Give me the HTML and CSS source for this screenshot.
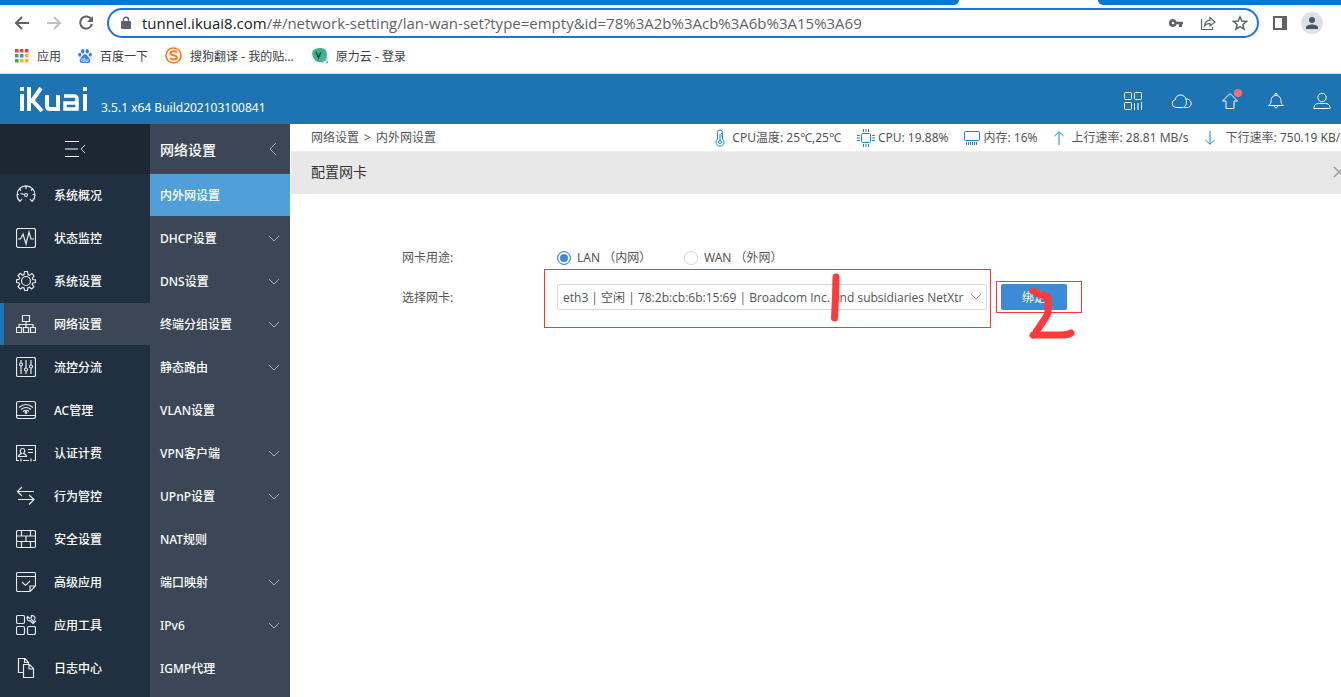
FILE: index.html
```html
<!DOCTYPE html>
<html lang="zh-CN">
<head>
<meta charset="utf-8">
<title>iKuai - 内外网设置</title>
<link rel="stylesheet" href="styles.css">
</head>
<body>
<div class="browser">
  <div class="tabstrip"><span class="tabstrip-left"></span><span class="tabstrip-right"></span></div>
  <div class="toolbar">
    <button class="tool" aria-label="后退"><svg width="16" height="16" viewBox="0 0 16 16"><path d="M15 8H2M8 2L2 8l6 6" fill="none" stroke="#5f6368" stroke-width="2"/></svg></button>
    <button class="tool" aria-label="前进"><svg width="16" height="16" viewBox="0 0 16 16"><path d="M1 8h13M8 2l6 6-6 6" fill="none" stroke="#bdc1c6" stroke-width="2"/></svg></button>
    <button class="tool" aria-label="刷新"><svg width="16" height="16" viewBox="0 0 16 16"><path d="M13.400 4.600A6 6 0 1 0 14 9" fill="none" stroke="#5f6368" stroke-width="2"/><path d="M15 1v6H9z" fill="#5f6368"/></svg></button>
    <div class="omnibox">
      <svg width="10" height="14" viewBox="0 0 10 14"><path d="M2.500 6V3.700a2.500 2.500 0 0 1 5 0V6" fill="none" stroke="#5f6368" stroke-width="1.400"/><rect y="5" width="10" height="8" rx="1" fill="#5f6368"/></svg>
      <p class="url"><span class="url-host">tunnel.ikuai8.com</span>/#/network-setting/lan-wan-set?type=empty&amp;id=78%3A2b%3Acb%3A6b%3A15%3A69</p>
      <div class="omni-actions">
        <svg width="16" height="16" viewBox="0 0 16 16"><path fill="#5f6368" fill-rule="evenodd" d="M5 4a4 4 0 1 0 3.700 5.300H11V12h3V9.300h1V6.700H8.700A4 4 0 0 0 5 4zm0 2.700a1.300 1.300 0 1 1 0 2.600 1.300 1.300 0 0 1 0-2.600z"/></svg>
        <svg width="16" height="16" viewBox="0 0 16 16"><path d="M1.500 4v10.500h11V12M4.500 11c.5-4 2.500-5.500 5.500-5.800V2.500L15 7l-5 4V8.300c-2.300 0-4 .7-5.500 2.700z" fill="none" stroke="#5f6368" stroke-width="1.200"/></svg>
        <svg width="16" height="16" viewBox="0 0 16 16"><path d="M8 1.800l1.800 4.300 4.700.4-3.600 3 1.100 4.600L8 11.700l-4 2.400 1.100-4.600-3.600-3 4.700-.4z" fill="none" stroke="#5f6368" stroke-width="1.500"/></svg>
      </div>
    </div>
    <button class="tool" aria-label="侧边栏"><svg width="14" height="14" viewBox="0 0 14 14"><path fill="#5f6368" fill-rule="evenodd" d="M0 0h14v14H0zM2 2v10h7V2z"/></svg></button>
    <button class="tool" aria-label="用户"><svg width="22" height="22" viewBox="0 0 22 22"><circle cx="11" cy="11" r="11" fill="#dee1e6"/><circle cx="11" cy="8" r="3" fill="#4d5669"/><path d="M5 17v-1.500c0-2 3-3 6-3s6 1 6 3V17z" fill="#4d5669"/></svg></button>
  </div>
  <nav class="bookmarks">
    <a href="#apps"><svg width="14" height="14" viewBox="0 0 14 14"><path fill="#ea4335" d="M0 0h3.500v3.500H0zM5 0h3.500v3.500H5zM10 0h3.500v3.500H10z"/><path fill="#34a853" d="M0 5h3.500v3.500H0zM0 10h3.500v3.500H0z"/><path fill="#4285f4" d="M5 5h3.500v3.500H5z"/><path fill="#fbbc04" d="M10 5h3.500v3.500H10zM5 10h3.500v3.500H5zM10 10h3.500v3.500H10z"/></svg><span>应用</span></a>
    <a href="#baidu"><svg width="14" height="16" viewBox="0 0 14 16"><g fill="#2f80f5"><ellipse cx="4.700" cy="3.200" rx="1.700" ry="2.300"/><ellipse cx="9.200" cy="3.200" rx="1.700" ry="2.300"/><ellipse cx="1.700" cy="6.800" rx="1.600" ry="2"/><ellipse cx="12.300" cy="6.800" rx="1.600" ry="2"/><path d="M7 6.300c2.300 0 2.600 2.400 4.200 3.900 1.800 1.600 1.300 4.500-1 4.800-1.300.2-2-.3-3.200-.3s-1.900.5-3.200.3c-2.300-.3-2.800-3.200-1-4.800C4.400 8.700 4.700 6.300 7 6.300z"/></g><path d="M6.200 9.500v3.900H4.500a1 1 0 0 1 0-2.200h1.600M7.800 11v2.400H10V11" fill="none" stroke="#fff" stroke-width=".8"/></svg><span>百度一下</span></a>
    <a href="#sogou"><svg width="17" height="17" viewBox="0 0 17 17"><circle cx="8.500" cy="8.500" r="7.500" fill="#fff" stroke="#ff7518" stroke-width="1.600"/><path d="M12 5.300C10.500 4 5.300 3.800 5.300 6.300c0 2.600 6.600 1.500 6.600 4.200 0 2.400-5 2.300-7 .8" fill="none" stroke="#ff7518" stroke-width="2"/></svg><span>搜狗翻译 - 我的贴...</span></a>
    <a href="#yuanli"><svg width="17" height="17" viewBox="0 0 17 17"><path d="M2 3.500C4 .5 12 0 14.500 3s1.500 9-1 11-7.500 1.500-9.500-1S0 6.500 2 3.500z" fill="#3cb489"/><path d="M5 5l2.500 5.500L10 5" fill="none" stroke="#213f52" stroke-width="1.500"/><path d="M10.500 12h3M12 12v4M16.500 12h-2v2h2v2h-2" fill="none" stroke="#75a9e8" stroke-width="1"/></svg><span>原力云 - 登录</span></a>
  </nav>
</div>

<header class="header">
  <svg class="logo" role="img" aria-label="iKuai" width="69" height="25" viewBox="0 0 69 25"><g fill="none" stroke="#fff" stroke-width="4"><path d="M3 0v4M3 7v17M10 0v24M10 14h3L22 1M13 13l10 11" /><path d="M28 8v11q0 3 3 3h8V8" /><path d="M45 9h10q3 0 3 3v10H46v-6h12"  stroke-width="3.500"/><path d="M66 0v4M66 7v17"/></g></svg>
  <span class="version">3.5.1 x64 Build202103100841</span>
  <div class="header-actions">
    <button aria-label="应用"><svg width="20" height="20" viewBox="0 0 20 20"><rect x="1.500" y="1.500" width="7" height="7" rx="1"/><rect x="11.500" y="1.500" width="7" height="7" rx="1"/><rect x="1.500" y="11.500" width="7" height="7" rx="1"/><path d="M11.500 12v7M15 12v7M18.500 11v8"/></svg></button>
    <button aria-label="云"><svg width="22" height="20" viewBox="0 0 22 20"><path d="M5 16.500a4 4 0 0 1-.6-7.900C4.800 2.500 14 2.500 15 8.500c1.500 3-.5 8-3.500 8zM15 8c5-.5 7.500 6 2.500 8.500h-4"/></svg></button>
    <button class="has-dot" aria-label="升级"><svg width="18" height="20" viewBox="0 0 18 20"><path d="M9 2.500L1.500 10H5v7.500h8V10h3.500z"/></svg></button>
    <button aria-label="通知"><svg width="18" height="20" viewBox="0 0 18 20"><path d="M1.500 14.500c3-1 2-4 3-7 1-4 8-4 9 0 1 3 0 6 3 7zM7 14.500q2 5 4 0M8 4V2.500h2V4"/></svg></button>
    <button aria-label="账户"><svg width="18" height="20" viewBox="0 0 18 20"><circle cx="9" cy="6.500" r="4.200"/><path d="M1 17.500v-1c0-2.500 2-4 4.500-4h7c2.500 0 4.500 1.500 4.500 4v1z"/></svg></button>
  </div>
</header>

<div class="app">
  <nav class="sidebar">
    <button class="collapse" aria-label="收起菜单"><svg width="22" height="18" viewBox="0 0 22 18"><path d="M1 1.500h14M1 16.500h14" stroke="#fff"/><path d="M1 9h13" stroke="#8b949d" stroke-width="2"/><path d="M21 5l-4 4 4 4" stroke="#d3d7da"/></svg></button>
    <a class="item" href="#overview"><svg width="20" height="20" viewBox="0 0 20 20"><path d="M4 16.500a9 9 0 1 1 12 0M4 16.500L6 14M16 16.500L14 14M10 1v3M1 9.500h2M16.500 9.500H19M3.500 4L5 5.500M16.500 4L15 5.500M4.500 8.500l4 1"/><circle cx="10" cy="10" r="1.500"/></svg><span>系统概况</span></a>
    <a class="item" href="#monitor"><svg width="20" height="20" viewBox="0 0 20 20"><rect x=".5" y=".5" width="19" height="19" rx="2"/><path d="M2 11h2.500L7 6l3 10L13 4l2 7h3"/></svg><span>状态监控</span></a>
    <a class="item" href="#system"><svg width="20" height="20" viewBox="0 0 20 20"><circle cx="10" cy="10" r="4.500"/><path d="M8.500.5h3l.5 3 1.500.7L16 2.500 18 5l-1.700 2.200.5 1.300 2.700.3v2.700l-2.700.5-.6 1.500L18 15.700 15.700 18l-2.400-1.700-1.500.6-.4 2.600H8.600L8 17l-1.400-.6L4.300 18 2 15.700l1.700-2.300L3 12l-2.500-.5V8.800L3 8.300 3.700 7 2 4.500 4.300 2.300l2.300 1.900L8 3.500z"/></svg><span>系统设置</span></a>
    <a class="item current" href="#network"><svg width="20" height="20" viewBox="0 0 20 20"><path d="M6.500 1.500h7v6h-7zM.5 13.500h5v5h-5zM7.500 13.500h5v5h-5zM14.500 13.500h5v5h-5zM10 7.500v6M3 13.500v-3h14v3"/></svg><span>网络设置</span></a>
    <a class="item" href="#flow"><svg width="20" height="20" viewBox="0 0 20 20"><rect x=".5" y=".5" width="19" height="19" rx="1.500"/><path d="M5 3v3M5 9v8M10 3v8M10 14v3M15 3v5M15 11v6"/><circle cx="5" cy="7.500" r="1.500"/><circle cx="10" cy="12.500" r="1.500"/><circle cx="15" cy="9.500" r="1.500"/></svg><span>流控分流</span></a>
    <a class="item" href="#ac"><svg width="20" height="20" viewBox="0 0 20 20"><rect x=".5" y="1.500" width="19" height="17" rx="2"/><path d="M1 15.500h18M3 7.500q7-6 14 0M5 9.500q5-4 10 0M7 11.500q3-2.500 6 0"/><circle cx="10" cy="12.500" r=".8"/></svg><span>AC管理</span></a>
    <a class="item" href="#auth"><svg width="20" height="20" viewBox="0 0 20 20"><path d="M3 17.500H.5v-15h19v15H17M5 15.500v3M15 15.500v3M7 17.500h6M12 6.500h5M12 9.500h5M2.500 13.500c0-2 1.500-2 3-3-2-2-1.500-5 1-5s3 3 1 5c1.500 1 3 1 3 3z"/></svg><span>认证计费</span></a>
    <a class="item" href="#behavior"><svg width="20" height="20" viewBox="0 0 20 20"><path d="M18 5.500H1.500M6 1L1.500 5.500 6 10M2 13.500h16M13 9l5 4.500-5 5"/></svg><span>行为管控</span></a>
    <a class="item" href="#security"><svg width="20" height="20" viewBox="0 0 20 20"><rect x=".5" y="1.500" width="19" height="17" rx="1.500"/><path d="M1 7h18M1 12.500h18M5.500 2v5M14.500 2v5M10 7v5.500M5.500 12.500v6M14.500 12.500v6"/></svg><span>安全设置</span></a>
    <a class="item" href="#advanced"><svg width="20" height="20" viewBox="0 0 20 20"><path d="M19.500 14V2q0-1.500-1.500-1.500H2Q.5.500.5 2v16q0 1.500 1.500 1.500h12zM14 19.500V14h5.500M1 4.500h18M6 10l3.500 3.500L14 9"/></svg><span>高级应用</span></a>
    <a class="item" href="#tools"><svg width="20" height="20" viewBox="0 0 20 20"><rect x=".5" y=".5" width="8" height="8" rx="1.500"/><rect x=".5" y="11.500" width="8" height="8" rx="1.500"/><rect x="11.500" y="11.500" width="8" height="8" rx="1.500"/><path d="M11.500 1.500l2 2 2-1v-2c3 0 4 2 3 4l1 2-2.500 2-3-3c-2 1-3.500-1-2.500-4zM15 4l3 3"/></svg><span>应用工具</span></a>
    <a class="item" href="#log"><svg width="20" height="20" viewBox="0 0 20 20"><path d="M7 14.500H2.500V.5H9l3.500 4v2M8.500.5v4h4M7.500 6.500h6l4 4v9h-10zM13 6.500V11h4.500"/></svg><span>日志中心</span></a>
  </nav>

  <nav class="submenu">
    <button class="submenu-title"><span>网络设置</span><svg width="8" height="12" viewBox="0 0 8 12"><path d="M7 0L1 6l6 6"/></svg></button>
    <a class="item active" href="#lanwan"><span>内外网设置</span></a>
    <a class="item" href="#dhcp"><span>DHCP设置</span><svg width="12" height="7" viewBox="0 0 12 7"><path d="M1 1l5 5 5-5"/></svg></a>
    <a class="item" href="#dns"><span>DNS设置</span><svg width="12" height="7" viewBox="0 0 12 7"><path d="M1 1l5 5 5-5"/></svg></a>
    <a class="item" href="#group"><span>终端分组设置</span><svg width="12" height="7" viewBox="0 0 12 7"><path d="M1 1l5 5 5-5"/></svg></a>
    <a class="item" href="#route"><span>静态路由</span><svg width="12" height="7" viewBox="0 0 12 7"><path d="M1 1l5 5 5-5"/></svg></a>
    <a class="item" href="#vlan"><span>VLAN设置</span></a>
    <a class="item" href="#vpn"><span>VPN客户端</span><svg width="12" height="7" viewBox="0 0 12 7"><path d="M1 1l5 5 5-5"/></svg></a>
    <a class="item" href="#upnp"><span>UPnP设置</span><svg width="12" height="7" viewBox="0 0 12 7"><path d="M1 1l5 5 5-5"/></svg></a>
    <a class="item" href="#nat"><span>NAT规则</span></a>
    <a class="item" href="#port"><span>端口映射</span><svg width="12" height="7" viewBox="0 0 12 7"><path d="M1 1l5 5 5-5"/></svg></a>
    <a class="item" href="#ipv6"><span>IPv6</span><svg width="12" height="7" viewBox="0 0 12 7"><path d="M1 1l5 5 5-5"/></svg></a>
    <a class="item" href="#igmp"><span>IGMP代理</span></a>
  </nav>

  <main class="main">
    <div class="statusbar">
      <div class="crumbs"><span>网络设置</span><span>&gt;</span><span>内外网设置</span></div>
      <div class="stats">
        <span class="stat temp"><svg width="12" height="18" viewBox="0 0 12 18"><path d="M3.500 10V3.500a2.500 2.500 0 0 1 5 0V10a4 4 0 1 1-5 0zM6 5v7M7 4.500h1M7 7h1"/><circle cx="6" cy="13" r="1.500"/></svg><span>CPU温度: 25℃,25℃</span></span>
        <span class="stat"><svg width="18" height="18" viewBox="0 0 18 18"><rect x="4.500" y="4.500" width="9" height="9" rx="1"/><path d="M6.500 0v3M9 0v3M11.500 0v3M6.500 15v3M9 15v3M11.500 15v3M0 6.500h3M0 9h3M0 11.500h3M15 6.500h3M15 9h3M15 11.500h3"/></svg><span>CPU: 19.88%</span></span>
        <span class="stat"><svg width="16" height="14" viewBox="0 0 16 14"><rect x=".5" y=".5" width="15" height="9" rx="1"/><path d="M2.500 11v3M4.500 11v3M6.500 11v3M8.500 11v3M10.500 11v3M12.500 11v3"/></svg><span>内存: 16%</span></span>
        <span class="stat arrow"><svg width="10" height="14" viewBox="0 0 10 14"><path d="M5 14V1M.5 5L5 .7 9.500 5"/></svg><span>上行速率: 28.81 MB/s</span></span>
        <span class="stat down"><svg width="10" height="14" viewBox="0 0 10 14"><path d="M5 0v13M.5 9L5 13.300 9.500 9"/></svg><span>下行速率: 750.19 KB/s</span></span>
      </div>
    </div>
    <div class="panel-head"><h1>配置网卡</h1><button aria-label="关闭"><svg width="12" height="12" viewBox="0 0 12 12"><path d="M1 1l10 10M11 1L1 11" stroke="#999" stroke-width="1.500"/></svg></button></div>
    <form class="form">
      <div class="row" role="radiogroup" aria-labelledby="usage">
        <span class="label" id="usage">网卡用途:</span>
        <label class="radio"><input type="radio" name="usage" checked><span>LAN （内网）</span></label>
        <label class="radio"><input type="radio" name="usage"><span>WAN （外网）</span></label>
      </div>
      <div class="row">
        <label class="label" for="nic">选择网卡:</label>
        <div class="select-wrap">
          <select id="nic"><option>eth3 | 空闲 | 78:2b:cb:6b:15:69 | Broadcom Inc. and subsidiaries NetXtr</option></select>
          <svg class="caret" width="12" height="8" viewBox="0 0 12 8"><path d="M1 1l5 5 5-5"/></svg>
          <span class="mark mark-select"></span>
          <svg class="stroke stroke-one" width="12" height="52" viewBox="0 0 12 52"><path d="M7 5L6.500 25 5.500 46"/></svg>
        </div>
        <div class="bind-wrap">
          <button class="bind" type="button">绑定</button>
          <span class="mark mark-bind"></span>
          <svg class="stroke stroke-two" width="52" height="60" viewBox="0 0 52 60"><path d="M6 7q3 1 7 4 8 0 8 5v13q-2 5-6 10l-6 9q-1 4-3 3h27q8 0 11-2"/></svg>
        </div>
      </div>
    </form>
  </main>
</div>
</body>
</html>
```

FILE: styles.css
```css
* { box-sizing: border-box; }
body {
  margin: 0;
  height: 100vh;
  display: flex;
  flex-direction: column;
  overflow: hidden;
  background: #fff;
  color: #555;
  font: 12px/18px "Noto Sans", "Noto Sans CJK SC", sans-serif;
}
button { font: inherit; border: 0; padding: 0; background: none; }
a { color: inherit; text-decoration: none; }
svg { display: block; flex: none; }

.tabstrip { display: flex; justify-content: space-between; height: 5px; }
.tabstrip span { background: #0078d7; }
.tabstrip-left { width: 71.5%; border-bottom-right-radius: 5px; }
.tabstrip-right { width: 18.1%; border-bottom-left-radius: 5px; }
.toolbar { display: flex; align-items: center; height: 35px; padding: 0 18px 0 14px; gap: 16px; }
.omnibox {
  flex: 1;
  display: flex;
  align-items: center;
  gap: 11px;
  height: 30px;
  margin: 0 -2px 0 -3px;
  padding: 0 9px 0 12px;
  border: 2px solid #1a73e8;
  border-radius: 15px;
}
.omnibox + .tool { margin-right: -2px; }
.url { margin: 0; font: 15px/20px "Open Sans", sans-serif; color: #5f6368; white-space: nowrap; }
.url-host { color: #202124; }
.omni-actions { display: flex; gap: 16px; margin-left: auto; }
.bookmarks {
  display: flex;
  align-items: center;
  gap: 17px;
  height: 34px;
  padding: 0 15px;
  border-bottom: 1px solid #dadce0;
  color: #3c4043;
}
.bookmarks a { display: flex; align-items: center; gap: 8px; }
.bookmarks svg { margin-bottom: 2px; }

.header { display: flex; align-items: center; height: 50px; padding: 0 10px 0 19px; background: #1e73b3; color: #fff; }
.version { margin: 18px 0 0 13px; }
.header-actions { display: flex; gap: 28px; margin: 4px 0 0 auto; }
.header-actions svg { fill: none; stroke: #fff; stroke-width: 1; }
.has-dot { position: relative; }
.has-dot::after {
  content: "";
  position: absolute;
  top: -2px;
  right: -3px;
  width: 8px;
  height: 8px;
  border-radius: 50%;
  background: #ff6b70;
}

.app { flex: 1; display: flex; min-height: 0; }
.sidebar, .submenu { display: flex; flex-direction: column; gap: 1px; color: #fff; font-weight: 500; flex: none; }
.item { display: flex; align-items: center; height: 42px; flex: none; }
.item span, .submenu-title span { padding-top: 2px; }
.sidebar { width: 150px; background: #213040; }
.sidebar .item { gap: 18px; padding-left: 16px; }
.sidebar .item svg { fill: none; stroke: #e8ebed; stroke-width: 1.2; }
.sidebar .current { background: #3b4757; border-left: 4px solid #1e73b3; padding-left: 12px; }
.collapse { display: flex; align-items: center; justify-content: center; height: 50px; margin-bottom: -1px; background: #1c2733; flex: none; }
.collapse svg { fill: none; }
.submenu { width: 140px; background: #3b4757; }
.submenu .item { justify-content: space-between; padding: 0 10px; }
.submenu .active { background: #509fd9; }
.submenu svg { fill: none; stroke: #a9b0b8; }
.submenu-title {
  display: flex;
  align-items: center;
  justify-content: space-between;
  height: 50px;
  margin-bottom: -1px;
  padding: 0 13px 0 10px;
  color: #fff;
  font-size: 14px;
  flex: none;
}

.main { flex: 1; min-width: 0; overflow: hidden; }
.statusbar { display: flex; align-items: center; justify-content: space-between; height: 28px; margin-right: -5px; padding-left: 21px; border-bottom: 1px solid #eee; white-space: nowrap; }
.crumbs { display: flex; gap: 5px; }
.stats { display: flex; align-items: center; gap: 16px; }
.stat { display: flex; align-items: center; gap: 3px; }
.temp { gap: 6px; }
.arrow { gap: 8px; }
.down { gap: 11px; }
.stats svg { fill: none; stroke: #1787c9; }
.panel-head { display: flex; align-items: center; justify-content: space-between; height: 42px; margin: 0 -4px 0 1px; padding: 0 0 2px 20px; background: #e8e8e8; }
.panel-head h1 { margin: 0; color: #333; font-size: 14px; font-weight: 400; }
.form { display: grid; gap: 14px; padding: 50px 20px 0 112px; }
.row { display: flex; align-items: center; height: 26px; }
.label { width: 155px; padding-top: 2px; }
.radio { display: flex; align-items: center; gap: 6px; width: 127px; padding-top: 2px; white-space: nowrap; }
.radio input {
  appearance: none;
  width: 14px;
  height: 14px;
  margin: 0;
  border: 1px solid #d5d5d5;
  border-radius: 50%;
  background: #fff;
}
.radio input:checked { border-color: #3d8bd6; background: #3d8bd6; box-shadow: inset 0 0 0 2px #fff; }
.select-wrap, .bind-wrap { position: relative; }
.select-wrap { width: 430px; }
.select-wrap select {
  appearance: none;
  display: block;
  width: 100%;
  height: 26px;
  padding: 2px 20px 0 5px;
  border: 1px solid #d9d9d9;
  border-radius: 2px;
  background: #fff;
  color: #555;
  font: 12px/18px "Open Sans", "Noto Sans CJK SC", sans-serif;
}
.caret { position: absolute; top: 9px; right: 5px; fill: none; stroke: #999; }
.bind-wrap { margin-left: 14px; }
.bind { width: 66px; height: 26px; padding-top: 2px; border-radius: 2px; background: #3d8bd6; color: #fff; }
.mark { position: absolute; border: 1px solid #fb3838; pointer-events: none; }
.mark-select { inset: -15px -4px -18px -13px; }
.mark-bind { inset: -3px -15px -3px -5px; }
.stroke { position: absolute; fill: none; stroke: #fe3a3a; stroke-width: 7; stroke-linecap: round; stroke-linejoin: round; }
.stroke-one { left: 272px; top: -12px; }
.stroke-two { left: 26px; top: 0; }
```
